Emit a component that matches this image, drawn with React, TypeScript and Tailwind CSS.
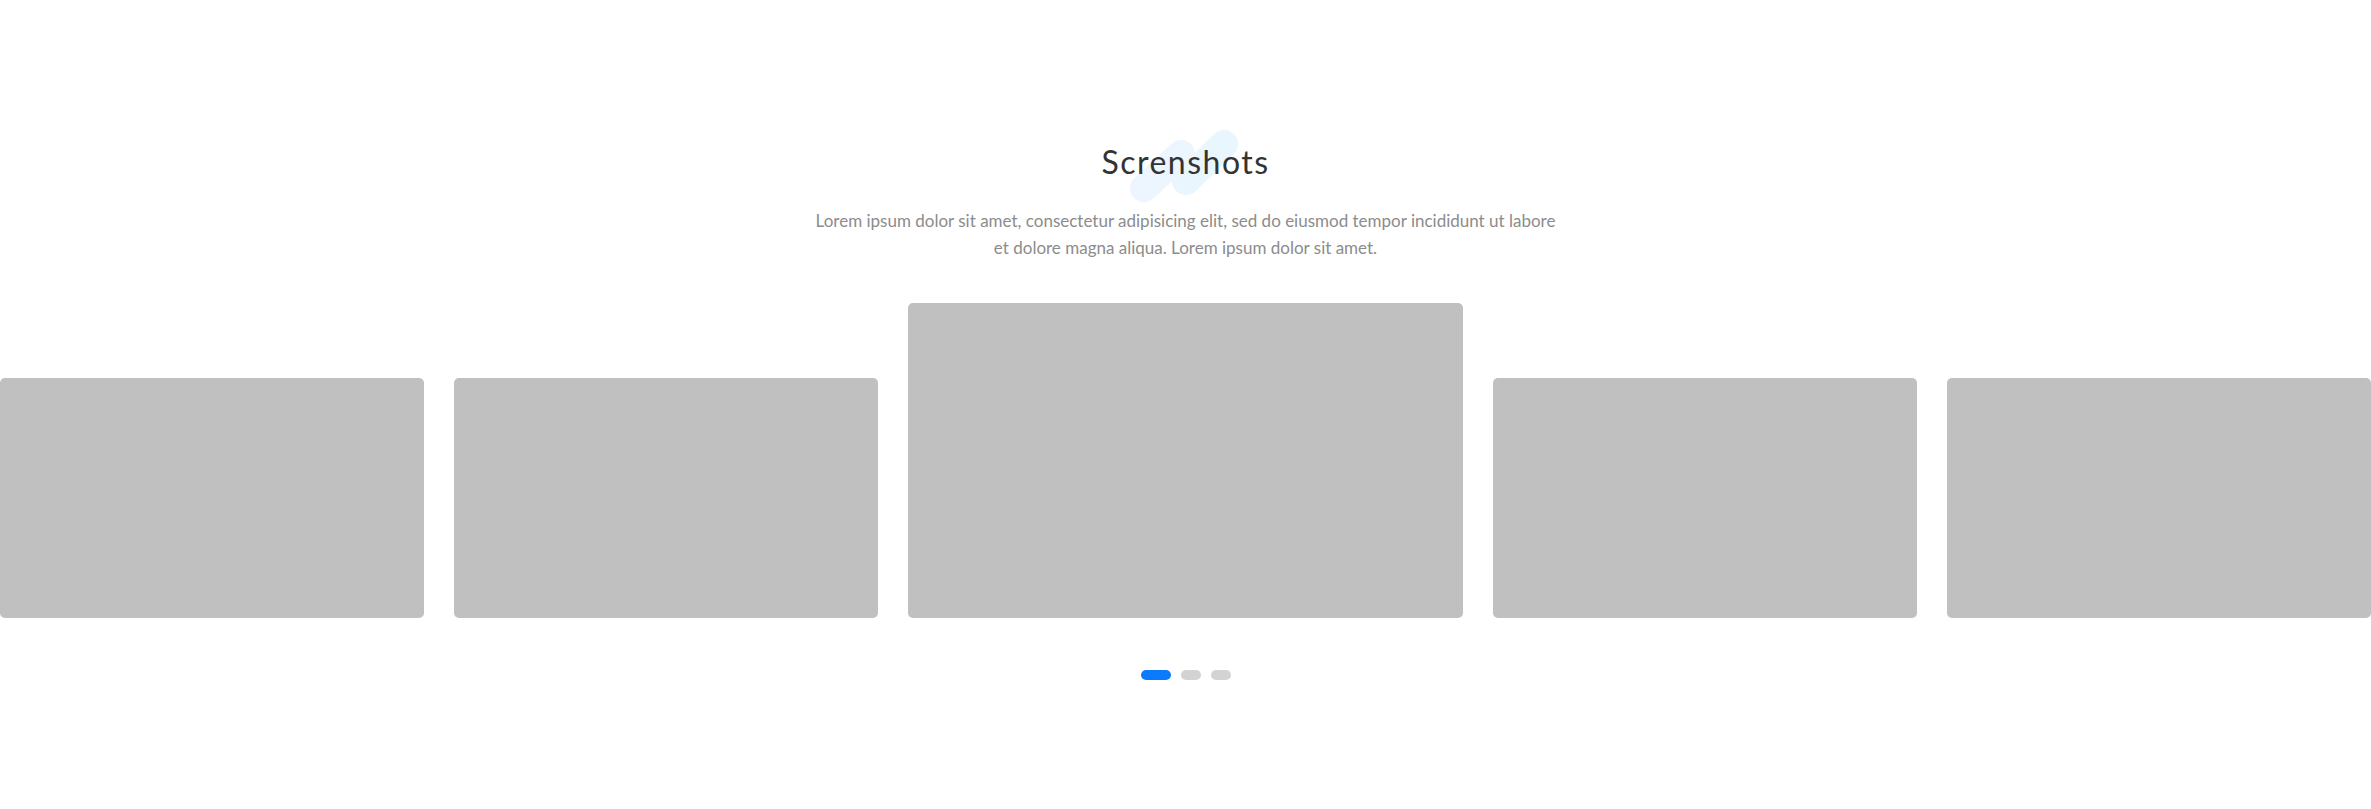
import React from "react";

export default function App() {
  const small = "w-[424px] h-[240px] shrink-0 rounded-[5px] bg-[#c0c0c0]";
  return (
    <div className="w-full h-[809px] bg-white overflow-hidden font-['Lato',sans-serif]">
      <div className="relative flex flex-col items-center pt-[140px]">
        <svg
          className="absolute left-[1110px] top-[110px]"
          width="150"
          height="110"
          viewBox="1110 110 150 110"
        >
          <line x1="1144" y1="188" x2="1181" y2="154" stroke="#edf5fe" strokeWidth="28" strokeLinecap="round" />
          <line x1="1186" y1="181" x2="1224" y2="144" stroke="#e9f6fd" strokeWidth="28" strokeLinecap="round" />
        </svg>
        <h2 className="relative text-[32px] leading-[44px] text-[#333333] tracking-[1.5px]">Screnshots</h2>
        <p className="relative mt-[23px] w-[780px] text-center text-[17px] leading-[27px] text-[#8c8c8c]">
          Lorem ipsum dolor sit amet, consectetur adipisicing elit, sed do eiusmod tempor incididunt ut labore
          <br />
          et dolore magna aliqua. Lorem ipsum dolor sit amet.
        </p>
      </div>
      <div className="mt-[42px] flex items-end gap-[30px]">
        <div className={small} />
        <div className={small} />
        <div className="w-[555px] h-[315px] shrink-0 rounded-[5px] bg-[#c0c0c0]" />
        <div className={small} />
        <div className={small} />
      </div>
      <div className="mt-[52px] flex justify-center gap-[10px]">
        <span className="h-[10px] w-[30px] rounded-full bg-[#0b7bfb]" />
        <span className="h-[10px] w-[20px] rounded-full bg-[#d3d3d3]" />
        <span className="h-[10px] w-[20px] rounded-full bg-[#d3d3d3]" />
      </div>
    </div>
  );
}
